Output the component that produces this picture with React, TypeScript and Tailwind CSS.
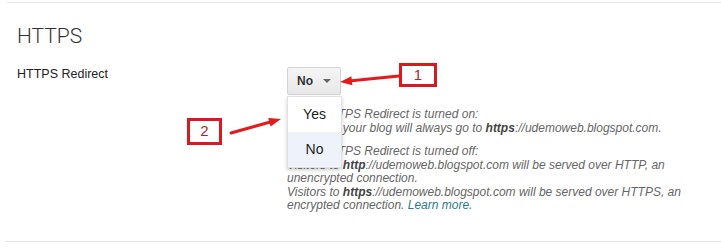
import React from 'react';

const Arrows = () => (
    <svg className="absolute inset-0 pointer-events-none" width="721" height="251" viewBox="0 0 721 251">
        <line x1="399" y1="76" x2="349" y2="81" stroke="#e31b1b" strokeWidth="3" strokeLinecap="round" />
        <polygon points="340,82 352.4,85.3 351.4,76.3" fill="#e31b1b" />
        <line x1="231" y1="133" x2="272" y2="121.5" stroke="#e31b1b" strokeWidth="3" strokeLinecap="round" />
        <polygon points="281,119 270.6,126.5 268.2,117.9" fill="#e31b1b" />
    </svg>
);

export default function App() {
    return (
        <div className="relative w-[721px] h-[251px] bg-white overflow-hidden font-['Liberation_Sans',Arial,sans-serif] text-[#333]">
            <div className="ml-[7px] mt-[2px] border-t border-[#e6e6e6]" />

            <section className="pl-[17px] pt-[20px]">
                <h2 className="font-['Roboto',sans-serif] font-light text-[21px] leading-[26px] text-[#333]">HTTPS</h2>

                <div className="flex mt-[17px]">
                    <div className="w-[270px] text-[12.5px] leading-[16px] text-[#222]">HTTPS Redirect</div>

                    <div className="relative">
                        <button className="mt-[1px] w-[54px] h-[28px] flex items-center justify-center gap-[10px] rounded-[2px] border border-[#d3d3d3] bg-gradient-to-b from-[#f5f5f5] to-[#e8e8e8] text-[12px] font-bold text-[#333]">
                            <span>No</span>
                            <span className="w-0 h-0 border-l-[4px] border-r-[4px] border-t-[4px] border-l-transparent border-r-transparent border-t-[#666]" />
                        </button>

                        <div className="mt-[13px] w-[420px] italic text-[12px] leading-[13.5px] text-[#666]">
                            <p>When HTTPS Redirect is turned on:</p>
                            <p>Visitors to your blog will always go to <b className="text-[#444]">https</b>://udemoweb.blogspot.com.</p>
                            <p className="mt-[10px]">When HTTPS Redirect is turned off:</p>
                            <p>Visitors to <b className="text-[#444]">http</b>://udemoweb.blogspot.com will be served over HTTP, an unencrypted connection.</p>
                            <p>Visitors to <b className="text-[#444]">https</b>://udemoweb.blogspot.com will be served over HTTPS, an encrypted connection. <a className="text-[#2b7a8a]">Learn more.</a></p>
                        </div>

                        <div className="absolute left-0 top-[30px] w-[55px] bg-white border border-[#e2e2e2] shadow-[0_2px_4px_rgba(0,0,0,0.2)] text-[14px] not-italic text-[#222]">
                            <div className="h-[35px] flex items-center justify-center">Yes</div>
                            <div className="h-[35px] flex items-center justify-center bg-[#eef3fb]">No</div>
                        </div>
                    </div>
                </div>
            </section>

            <div className="absolute left-[5px] right-0 top-[241px] border-t border-[#e6e6e6]" />

            <div className="absolute left-[399px] top-[63px] w-[38px] h-[24px] border-[3px] border-[#d71920] flex items-center justify-center text-[15px] text-[#b5262b]">1</div>
            <div className="absolute left-[187px] top-[118px] w-[35px] h-[27px] border-[3px] border-[#d71920] flex items-center justify-center text-[15px] text-[#b5262b]">2</div>

            <Arrows />
        </div>
    );
}
